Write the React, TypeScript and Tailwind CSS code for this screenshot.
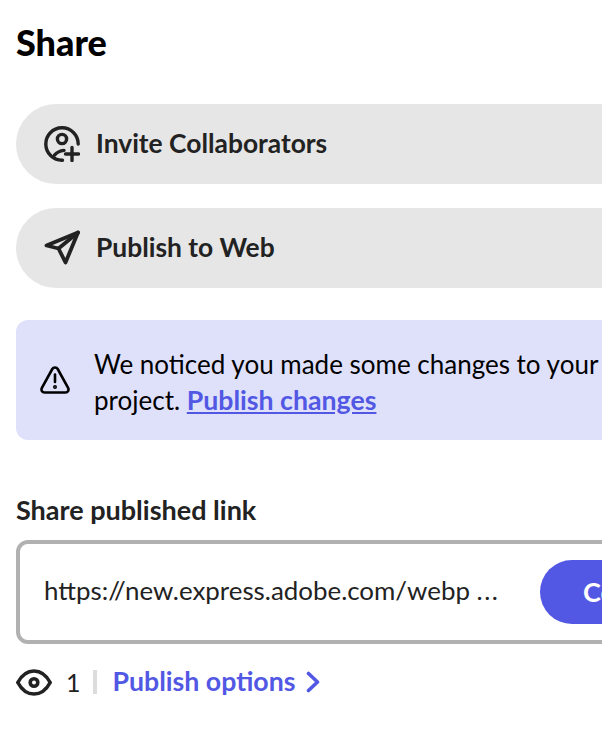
import React from 'react';

const FONT = "font-['Lato','Noto_Sans',sans-serif]";

function InviteIcon() {
  return (
    <svg width="36" height="36" viewBox="0 0 36 36" fill="none" stroke="#222222" strokeWidth="3.4" strokeLinecap="round" strokeLinejoin="round">
      <path d="M34.2 18A16.2 16.2 0 1 0 18.5 34.2" />
      <circle cx="18" cy="13" r="4.6" />
      <path d="M10.5 29.2C13 26.2 16 24.8 20 24.4" />
      <path d="M28 21.5V34.5M21.5 28H34.5" />
    </svg>
  );
}

function SendIcon() {
  return (
    <svg width="36" height="36" viewBox="0 0 36 36" fill="none" stroke="#222222" strokeWidth="3.8" strokeLinecap="round" strokeLinejoin="round">
      <path d="M34 2.5L2.5 15.5L14.5 18.5L21.5 32.5L34 2.5Z" />
      <path d="M14.5 18.5L34 2.5" />
    </svg>
  );
}

function AlertIcon() {
  return (
    <svg width="30" height="28" viewBox="0 0 30 28" fill="none" stroke="#000000" strokeWidth="2.6" strokeLinecap="round" strokeLinejoin="round">
      <path d="M12.3 3L1.9 21.9C0.8 24.2 2.1 26.5 4.6 26.5H25.4C27.9 26.5 29.2 24.2 28.1 21.9L17.7 3C16.5 0.9 13.5 0.9 12.3 3Z" />
      <path d="M15 8.5V16" />
      <circle cx="15" cy="21" r="0.7" fill="#000000" />
    </svg>
  );
}

function EyeIcon() {
  return (
    <svg width="36" height="27" viewBox="0 0 36 27" fill="none" stroke="#222222" strokeWidth="3.6" strokeLinecap="round" strokeLinejoin="round">
      <path d="M1.8 13.5C5.8 6 11.5 2 18 2C24.5 2 30.2 6 34.2 13.5C30.2 21 24.5 25 18 25C11.5 25 5.8 21 1.8 13.5Z" />
      <circle cx="18" cy="13.5" r="3.8" />
    </svg>
  );
}

function ChevronIcon() {
  return (
    <svg width="14" height="22" viewBox="0 0 14 22" fill="none" stroke="#5258e4" strokeWidth="3.6" strokeLinecap="round" strokeLinejoin="round">
      <path d="M2.5 2.5L11.5 11L2.5 19.5" />
    </svg>
  );
}

function ActionRow({ icon, label }: { icon: React.ReactNode; label: string }) {
  return (
    <button className="flex h-20 w-[640px] items-center gap-4 rounded-[40px] bg-[#e6e6e6] pl-[28px] text-left">
      {icon}
      <span className="-mt-0.5 text-[26.4px] leading-none font-bold text-[#222222]">{label}</span>
    </button>
  );
}

export default function App() {
  return (
    <div className={`h-[734px] w-[602px] overflow-hidden bg-white pl-4 ${FONT}`}>
      <div className="w-[640px]">
        <h1 className="flex h-[83px] items-center text-[36px] leading-none font-black text-black">Share</h1>

        <div className="mt-[21px] flex flex-col gap-6">
          <ActionRow icon={<InviteIcon />} label="Invite Collaborators" />
          <ActionRow icon={<SendIcon />} label="Publish to Web" />
        </div>

        <div className="mt-8 flex h-[120px] items-center gap-6 rounded-xl bg-[#dfe1fb] pl-[24px]">
          <AlertIcon />
          <p className="mt-1 w-[516px] text-[26px] leading-9 text-black">
            We noticed you made some changes to your project.{' '}
            <a className="text-[26.7px] font-bold text-[#5258e4] underline">Publish changes</a>
          </p>
        </div>

        <div className="mt-[55px] text-[27px] leading-[30px] font-bold text-[#222222]">Share published link</div>

        <div className="mt-[15px] flex h-[104px] items-center rounded-xl border-4 border-[#b1b1b1] bg-white pl-6">
          <span className="-mt-1 w-[496px] shrink-0 text-[25.9px] whitespace-nowrap text-[#222222]">
            https://new.express.adobe.com/webp <span className="tracking-[1.5px]">...</span>
          </span>
          <button className="flex h-16 w-[120px] shrink-0 items-center rounded-[32px] bg-[#5258e4] pl-[43px] text-[27px] font-bold text-white">
            Copy
          </button>
        </div>

        <div className="mt-[20px] flex h-9 items-center">
          <EyeIcon />
          <span className="ml-[14px] text-[25px] leading-none text-[#222222]">1</span>
          <span className="ml-3 h-6 w-1 bg-[#dcdcdc]" />
          <a className="-mt-0.5 ml-4 text-[26.7px] leading-none font-bold text-[#5258e4]">Publish options</a>
          <span className="ml-[11px] flex">
            <ChevronIcon />
          </span>
        </div>
      </div>
    </div>
  );
}
